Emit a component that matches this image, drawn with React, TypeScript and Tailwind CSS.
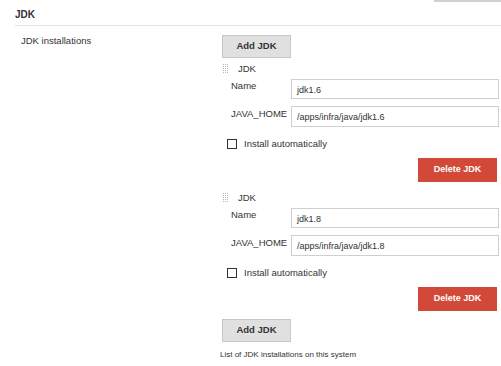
import React from 'react';

type Jdk = { name: string; home: string };

const jdks: Jdk[] = [
  { name: 'jdk1.6', home: '/apps/infra/java/jdk1.6' },
  { name: 'jdk1.8', home: '/apps/infra/java/jdk1.8' },
];

function DragHandle() {
  const dots = [];
  for (let r = 0; r < 5; r++) {
    for (let c = 0; c < 3; c++) {
      dots.push(<rect key={`${r}-${c}`} x={c * 2} y={r * 2} width="1" height="1" fill="#b5b5b5" />);
    }
  }
  return (
    <svg width="6" height="10" viewBox="0 0 6 10" className="shrink-0">
      {dots}
    </svg>
  );
}

function AddButton() {
  return (
    <button className="block h-[23px] w-[69px] border border-[#c8c8c8] bg-[#e0e0e0] text-[9.5px] font-bold text-[#333]">
      Add JDK
    </button>
  );
}

function JdkBlock({ jdk, first }: { jdk: Jdk; first: boolean }) {
  return (
    <div className={first ? 'mt-[4px]' : 'mt-[9px]'}>
      {/* title row */}
      <div className="flex h-[14px] items-center gap-[9px] pl-[1px]">
        <DragHandle />
        <span className="text-[9.5px] leading-[12px] text-[#333]">JDK</span>
      </div>

      <div className="mt-[3px] flex items-start pl-[9px]">
        <span className="w-[60px] pt-[1px] text-[9.5px] leading-[12px] text-[#333]">Name</span>
        <div className="flex h-[20px] w-[208px] items-center border border-[#cfcfcf] bg-white px-[5px] pt-[3px] text-[9px] text-[#333]">
          {jdk.name}
        </div>
      </div>

      <div className="mt-[7px] flex items-start pl-[9px]">
        <span className="w-[60px] pt-[2px] text-[9.5px] leading-[12px] text-[#333]">JAVA_HOME</span>
        <div className="flex h-[21px] w-[208px] items-center border border-[#cfcfcf] bg-white px-[5px] pt-[3px] text-[9px] text-[#333]">
          {jdk.home}
        </div>
      </div>

      <div className="mt-[10px] flex h-[13px] items-center gap-[7px] pl-[5px]">
        <span className="h-[10px] w-[10px] border border-[#333] bg-white" />
        <span className="text-[9.5px] leading-[12px] text-[#333]">Install automatically</span>
      </div>

      <div className="mt-[8px] flex justify-end pr-[4px]">
        <button className="block h-[24px] w-[79px] bg-[#d24939] text-[9px] font-bold text-white">Delete JDK</button>
      </div>
    </div>
  );
}

export default function App() {
  return (
    <div className="h-[366px] w-[501px] overflow-hidden bg-white font-['Liberation_Sans',Arial,sans-serif]">
      <div className="flex justify-end">
        <div className="h-[2px] w-[67px] bg-[#d0d0d0]" />
      </div>

      <div className="ml-[15px] mt-[7px] border-b border-[#e2e2e2] pb-[4px] text-[10px] font-bold leading-[12px] text-[#333]">
        JDK
      </div>

      <div className="flex">
        <div className="w-[222px] pl-[21px] pt-[9px] text-[9.5px] leading-[12px] text-[#333]">JDK installations</div>

        <div className="w-[279px]">
          <div className="mt-[9px] flex">
            <AddButton />
          </div>

          {jdks.map((jdk, i) => (
            <JdkBlock key={jdk.name} jdk={jdk} first={i === 0} />
          ))}

          <div className="mt-[8px] flex">
            <AddButton />
          </div>

          <div className="-ml-[2px] mt-[8px] text-[8px] leading-[10px] text-[#333]">
            List of JDK installations on this system
          </div>
        </div>
      </div>
    </div>
  );
}
